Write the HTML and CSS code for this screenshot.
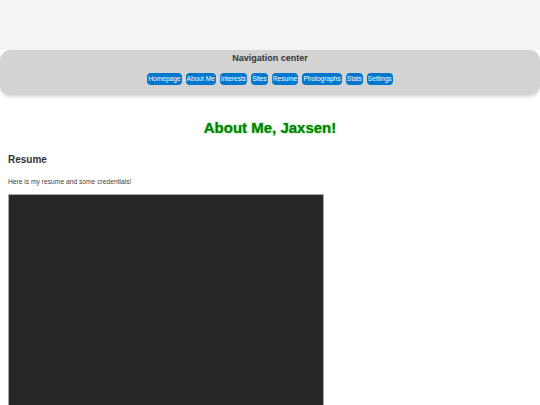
FILE: index.html
```html
<!DOCTYPE html>
<html>
<head>
<meta charset="utf-8">
<title>About Me</title>
<link rel="stylesheet" href="styles.css">
</head>
<body>
<header class="top"></header>
<nav class="nav">
  <p class="nav-title">Navigation center</p>
  <div class="links">
    <a class="btn" href="#">Homepage</a>
    <a class="btn" href="#">About Me</a>
    <a class="btn" href="#">Interests</a>
    <a class="btn" href="#">Sites</a>
    <a class="btn" href="#">Resume</a>
    <a class="btn" href="#">Photographs</a>
    <a class="btn" href="#">Stats</a>
    <a class="btn" href="#">Settings</a>
  </div>
</nav>
<main class="content">
  <h1 class="title">About Me, Jaxsen!</h1>
  <h2 class="section">Resume</h2>
  <p class="intro">Here is my resume and some credentials!</p>
  <div class="viewer"></div>
</main>
</body>
</html>
```
FILE: styles.css
```css
html, body {
  margin: 0;
  padding: 0;
  background: #ffffff;
  font-family: "Liberation Sans", Arial, sans-serif;
}
.top {
  height: 50px;
  background: #f4f4f4;
}
.nav {
  background: #d3d3d3;
  border-radius: 10px;
  box-shadow: 0 2px 3px rgba(0, 0, 0, 0.14);
  padding: 2px 0 10px;
  text-align: center;
}
.nav-title {
  margin: 0;
  font-size: 9px;
  line-height: 12px;
  font-weight: bold;
  color: #333333;
}
.links {
  display: flex;
  justify-content: center;
  gap: 4px;
  margin-top: 9px;
}
.btn {
  display: block;
  background: #0077cc;
  color: #ffffff;
  text-decoration: none;
  font-size: 6.6px;
  line-height: 10px;
  padding: 1px 1px;
  border-radius: 4px;
}
.content {
  padding: 0 8px;
}
.title {
  margin: 24px 0 0;
  text-align: center;
  font-size: 15px;
  line-height: 18px;
  font-weight: bold;
  color: #008000;
  text-shadow: 0 0 2px #55cc55;
}
.section {
  margin: 17px 0 0;
  font-size: 10px;
  line-height: 12px;
  font-weight: bold;
  color: #333333;
}
.intro {
  margin: 11px 0 0;
  font-size: 6.7px;
  line-height: 10px;
  color: #444444;
}
.viewer {
  margin-top: 7px;
  width: 314px;
  height: 400px;
  background: #262626;
  border: 1px solid #a8a8a8;
}
```
